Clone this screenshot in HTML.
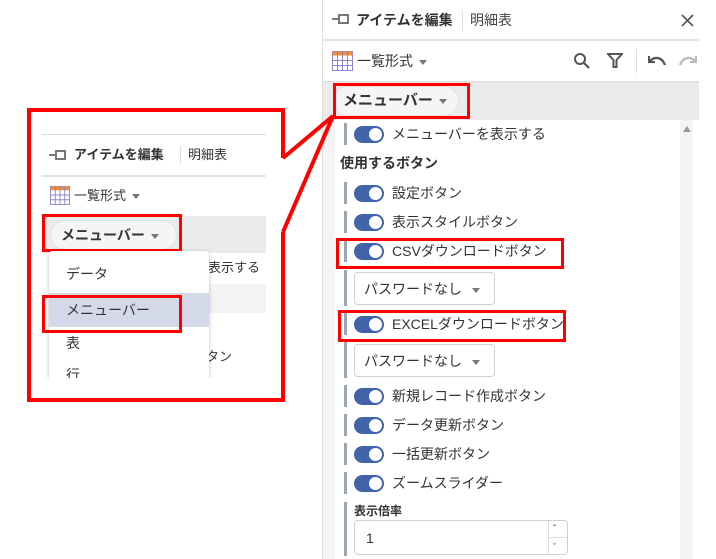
<!DOCTYPE html>
<html><head><meta charset="utf-8">
<style>
*{margin:0;padding:0;box-sizing:border-box}
body{width:716px;height:559px;background:#fff;position:relative;overflow:hidden;font-family:"Liberation Sans","Noto Sans CJK JP",sans-serif;color:#333;font-size:14px}
.a{position:absolute}
.t{position:absolute;white-space:nowrap;line-height:16px}
.bar{position:absolute;width:3px;background:#9aa6b4}
.tg{position:absolute;width:30px;height:17px;border-radius:9px;background:#4163a9}
.tg::after{content:"";position:absolute;right:2px;top:2px;width:13px;height:13px;border-radius:50%;background:#fff}
.row{position:absolute;left:335px;width:345px;background:#fff}
.caret{display:inline-block;width:0;height:0;border-left:4px solid transparent;border-right:4px solid transparent;border-top:5px solid #777;vertical-align:middle;margin-left:6px}
.red{position:absolute;border:3px solid #f00}
.sel{position:absolute;border:1px solid #d0d0d0;border-radius:4px;background:#fff}
</style></head><body>

<!-- Right panel -->
<div class="a" style="left:322px;top:0;width:1px;height:559px;background:#ddd"></div>
<div class="a" style="left:323px;top:0;width:376px;height:41px;background:#fff;border-bottom:2px solid #e4e4e4"></div>
<svg class="a" style="left:332px;top:13px" width="18" height="12" viewBox="0 0 18 12"><path d="M0 6H7M7 1V11M7 2H16V10H7" fill="none" stroke="#777" stroke-width="2"/></svg>
<div class="t" style="left:356px;top:12px;font-weight:bold;font-size:14px">アイテムを編集</div>
<div class="a" style="left:462px;top:11px;width:1px;height:20px;background:#ddd"></div>
<div class="t" style="left:470px;top:12px;color:#444">明細表</div>
<svg class="a" style="left:681px;top:14px" width="13" height="13" viewBox="0 0 13 13"><path d="M1 1L12 12M12 1L1 12" stroke="#555" stroke-width="1.6"/></svg>

<svg class="a" style="left:332px;top:51px" width="21" height="20" viewBox="0 0 21 20"><rect x="0.5" y="0.5" width="20" height="19" fill="#fff" stroke="#8b87cc"/><rect x="0.5" y="0.5" width="20" height="4" fill="#f08a3c"/><path d="M5.5 0V20M10.5 0V20M15.5 0V20M0 9.5H21M0 14.5H21" stroke="#8b87cc"/></svg>
<div class="t" style="left:357px;top:53px">一覧形式<span class="caret"></span></div>
<svg class="a" style="left:573px;top:52px" width="18" height="18" viewBox="0 0 18 18"><circle cx="7" cy="7" r="5" fill="none" stroke="#555" stroke-width="2"/><path d="M11 11L16 16" stroke="#555" stroke-width="2.2"/></svg>
<svg class="a" style="left:607px;top:52px" width="16" height="17" viewBox="0 0 16 17"><path d="M1 2H15L9.5 8V15H6.5V8Z" fill="none" stroke="#555" stroke-width="2"/></svg>
<div class="a" style="left:636px;top:49px;width:1px;height:24px;background:#ddd"></div>
<svg class="a" style="left:647px;top:54px" width="20" height="13" viewBox="0 0 20 13"><path d="M2 2V8H8" fill="none" stroke="#555" stroke-width="2"/><path d="M3 7C8 2 15 3 18 11" fill="none" stroke="#555" stroke-width="2.4"/></svg>
<svg class="a" style="left:678px;top:54px" width="20" height="13" viewBox="0 0 20 13"><path d="M18 2V8H12" fill="none" stroke="#bbb" stroke-width="2"/><path d="M17 7C12 2 5 3 2 11" fill="none" stroke="#bbb" stroke-width="2.4"/></svg>

<div class="a" style="left:323px;top:81px;width:376px;height:39px;background:#ebebeb;border-top:1px solid #ddd"></div>
<div class="a" style="left:333px;top:86px;width:126px;height:30px;border-radius:15px;background:#f5f5f5;border:1px solid #e2e2e2"></div>
<div class="t" style="left:343px;top:93px;font-weight:bold;font-size:15px">メニューバー<span class="caret"></span></div>
<div class="red" style="left:333px;top:83px;width:137px;height:36px"></div>

<div class="a" style="left:323px;top:120px;width:12px;height:439px;background:#f4f4f4"></div>
<div class="a" style="left:680px;top:120px;width:13px;height:439px;background:#f4f4f4"></div>
<div class="a" style="left:683px;top:126px;width:0;height:0;border-left:4px solid transparent;border-right:4px solid transparent;border-bottom:6px solid #999"></div>

<div class="row" style="top:120px;height:29px"></div>
<div class="bar" style="left:344px;top:123px;height:22px"></div><div class="tg" style="left:354px;top:126px"></div><div class="t" style="left:392px;top:126px">メニューバーを表示する</div>
<div class="t" style="left:340px;top:155px;font-weight:bold">使用するボタン</div>

<div class="row" style="top:179px;height:380px"></div>
<div class="bar" style="left:344px;top:182px;height:22px"></div><div class="tg" style="left:354px;top:185px"></div><div class="t" style="left:392px;top:185px">設定ボタン</div>
<div class="bar" style="left:344px;top:211px;height:22px"></div><div class="tg" style="left:354px;top:214px"></div><div class="t" style="left:392px;top:214px">表示スタイルボタン</div>
<div class="bar" style="left:344px;top:240px;height:22px"></div><div class="tg" style="left:354px;top:243px"></div><div class="t" style="left:392px;top:243px">CSVダウンロードボタン</div>
<div class="red" style="left:336px;top:238px;width:228px;height:31px"></div>
<div class="bar" style="left:344px;top:270px;height:36px"></div>
<div class="sel" style="left:354px;top:272px;width:141px;height:33px"></div><div class="t" style="left:364px;top:281px">パスワードなし<span class="caret" style="margin-left:10px"></span></div>
<div class="bar" style="left:344px;top:313px;height:22px"></div><div class="tg" style="left:354px;top:316px"></div><div class="t" style="left:392px;top:316px">EXCELダウンロードボタン</div>
<div class="red" style="left:338px;top:310px;width:228px;height:32px"></div>
<div class="bar" style="left:344px;top:342px;height:36px"></div>
<div class="sel" style="left:354px;top:344px;width:141px;height:33px"></div><div class="t" style="left:364px;top:353px">パスワードなし<span class="caret" style="margin-left:10px"></span></div>
<div class="bar" style="left:344px;top:385px;height:22px"></div><div class="tg" style="left:354px;top:388px"></div><div class="t" style="left:392px;top:388px">新規レコード作成ボタン</div>
<div class="bar" style="left:344px;top:414px;height:22px"></div><div class="tg" style="left:354px;top:417px"></div><div class="t" style="left:392px;top:417px">データ更新ボタン</div>
<div class="bar" style="left:344px;top:443px;height:22px"></div><div class="tg" style="left:354px;top:446px"></div><div class="t" style="left:392px;top:446px">一括更新ボタン</div>
<div class="bar" style="left:344px;top:472px;height:22px"></div><div class="tg" style="left:354px;top:475px"></div><div class="t" style="left:392px;top:475px">ズームスライダー</div>
<div class="bar" style="left:344px;top:502px;height:54px"></div>
<div class="t" style="left:354px;top:503px;font-weight:bold;font-size:12px">表示倍率</div>
<div class="sel" style="left:354px;top:520px;width:214px;height:35px"></div>
<div class="a" style="left:548px;top:521px;width:1px;height:33px;background:#ddd"></div>
<div class="a" style="left:549px;top:537px;width:18px;height:1px;background:#ddd"></div>
<div class="t" style="left:366px;top:530px">1</div>
<div class="t" style="left:553px;top:522px;font-size:10px">&#710;</div>
<div class="t" style="left:553px;top:539px;font-size:9px">&#711;</div>

<!-- Left inset -->
<div class="a" style="left:42px;top:134px;width:224px;height:1px;background:#ddd"></div>
<svg class="a" style="left:49px;top:150px" width="18" height="10" viewBox="0 0 18 10"><path d="M0 5H7M7 0V10M7 1H16V9H7" fill="none" stroke="#777" stroke-width="2"/></svg>
<div class="t" style="left:74px;top:147px;font-weight:bold;font-size:13px">アイテムを編集</div>
<div class="a" style="left:180px;top:146px;width:1px;height:18px;background:#ddd"></div>
<div class="t" style="left:188px;top:147px;font-size:13px">明細表</div>
<div class="a" style="left:42px;top:175px;width:224px;height:2px;background:#e4e4e4"></div>
<svg class="a" style="left:50px;top:186px" width="20" height="19" viewBox="0 0 21 20"><rect x="0.5" y="0.5" width="20" height="19" fill="#fff" stroke="#8b87cc"/><rect x="0.5" y="0.5" width="20" height="4" fill="#f08a3c"/><path d="M5.5 0V20M10.5 0V20M15.5 0V20M0 9.5H21M0 14.5H21" stroke="#8b87cc"/></svg>
<div class="t" style="left:74px;top:188px;font-size:13px">一覧形式<span class="caret"></span></div>
<div class="a" style="left:42px;top:216px;width:224px;height:37px;background:#ebebeb"></div>
<div class="a" style="left:50px;top:220px;width:127px;height:30px;border-radius:15px;background:#f5f5f5;border:1px solid #e2e2e2"></div>
<div class="t" style="left:61px;top:227px;font-weight:bold;font-size:14px">メニューバー<span class="caret"></span></div>
<div class="red" style="left:42px;top:214px;width:140px;height:38px"></div>
<div class="t" style="left:208px;top:260px;font-size:13px">表示する</div>
<div class="a" style="left:208px;top:284px;width:58px;height:29px;background:#f3f3f3"></div>
<div class="t" style="left:206px;top:349px;font-size:13px">タン</div>
<div class="a" style="left:49px;top:251px;width:160px;height:127px;background:#fff;box-shadow:0 1px 4px rgba(0,0,0,.25);border-radius:3px 3px 0 0;overflow:hidden">
  <div class="t" style="left:17px;top:15px;font-size:14px">データ</div>
  <div class="a" style="left:0;top:42px;width:160px;height:34px;background:#d3d9e9"></div>
  <div class="t" style="left:17px;top:51px;font-size:14px">メニューバー</div>
  <div class="t" style="left:17px;top:84px;font-size:14px">表</div>
  <div class="t" style="left:17px;top:116px;font-size:14px">行</div>
</div>
<div class="a" style="left:42px;top:378px;width:230px;height:20px;background:#fff"></div>
<div class="red" style="left:42px;top:295px;width:140px;height:38px"></div>

<svg class="a" style="left:0;top:0" width="716" height="559"><path d="M283 158L333 116L283 232" fill="none" stroke="#f00" stroke-width="4"/><path d="M283 158V110H29V400H283V232" fill="none" stroke="#f00" stroke-width="4"/></svg>
</body></html>
